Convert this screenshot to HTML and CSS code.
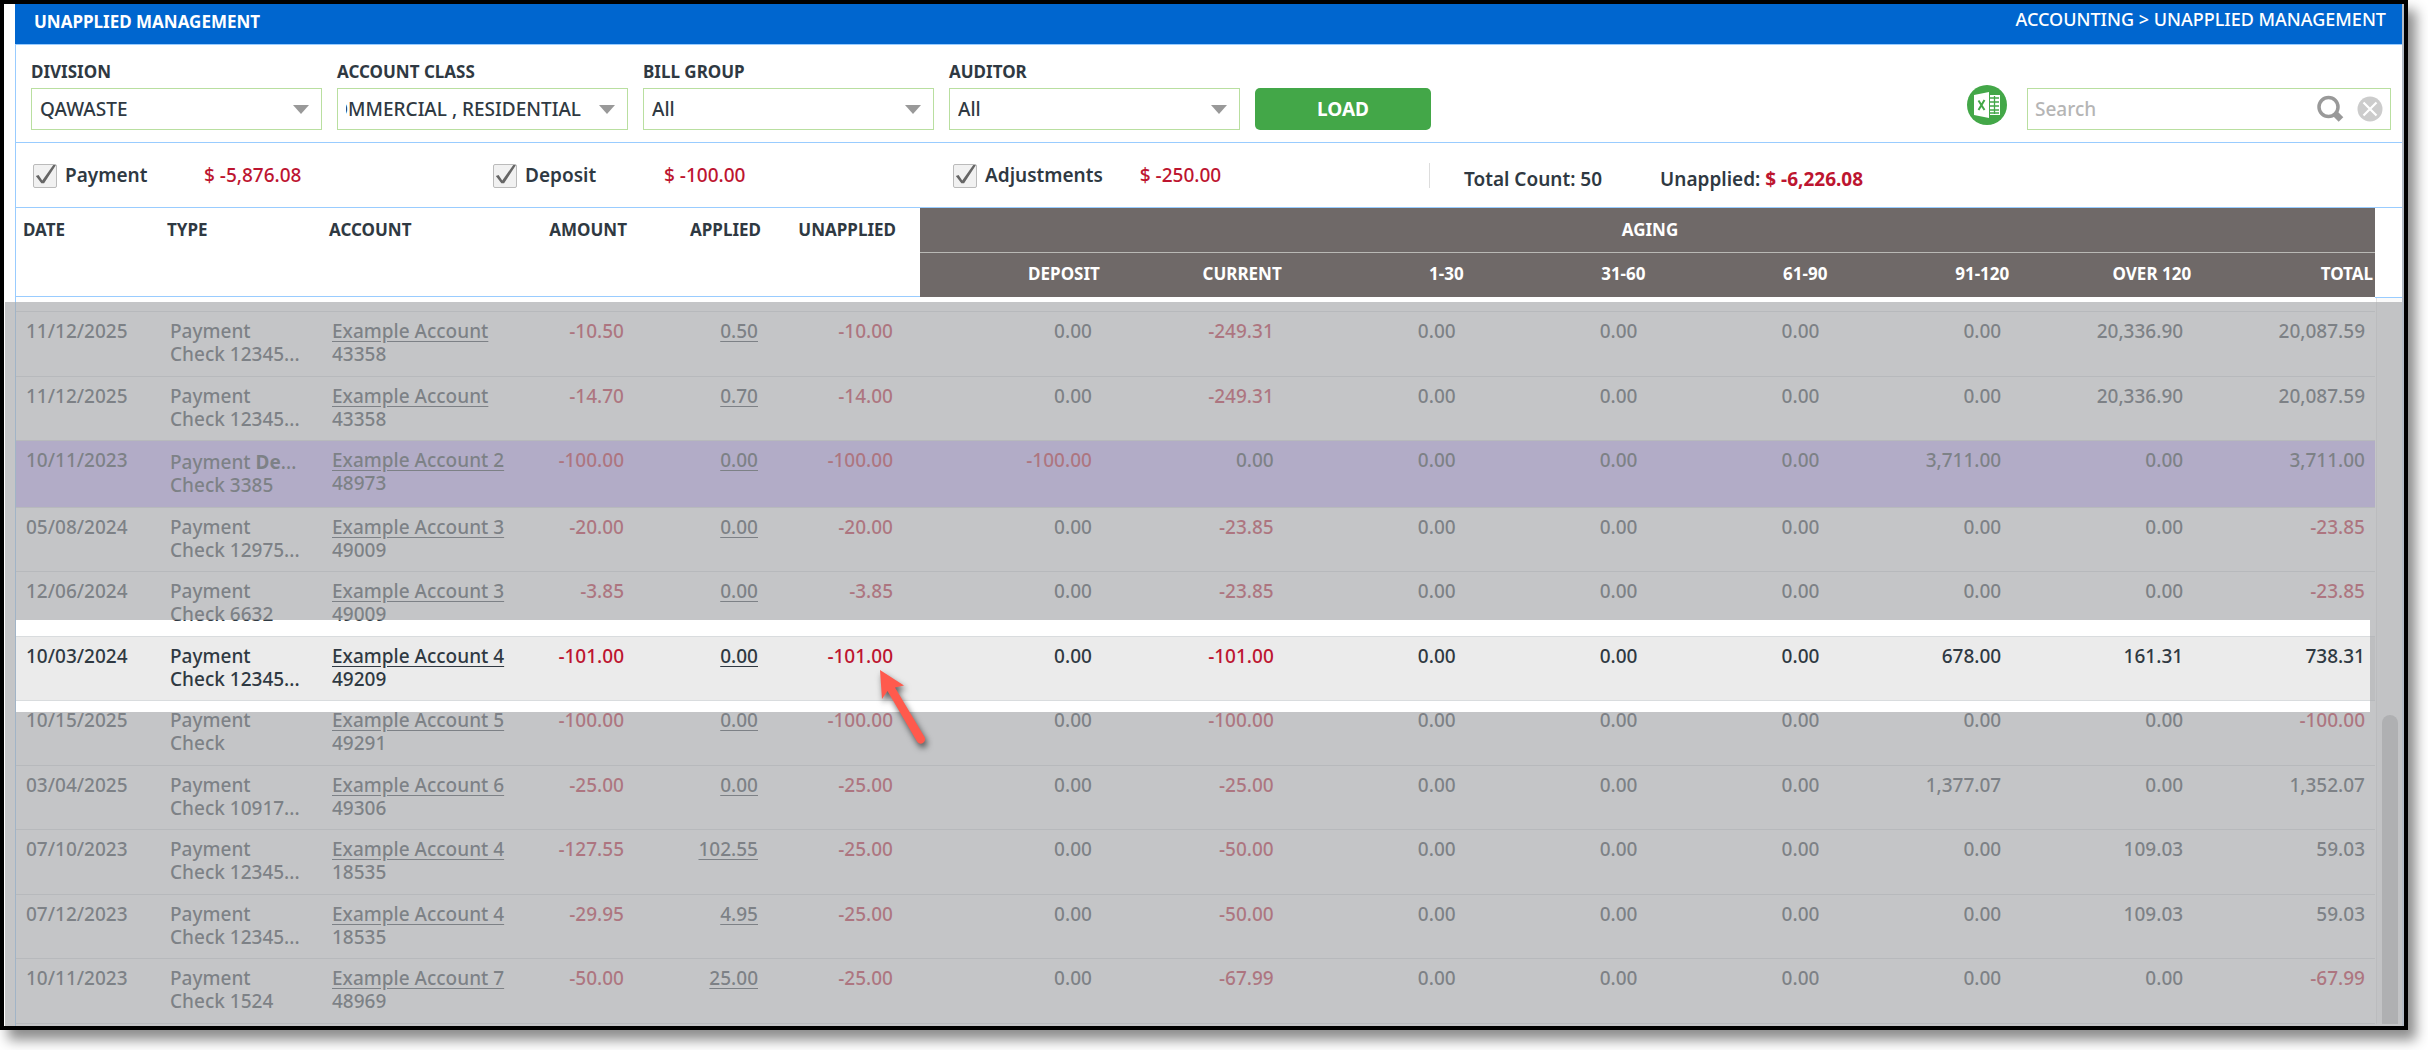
FILE: index.html
```html
<!DOCTYPE html>
<html lang="en">
<head>
    <meta charset="UTF-8">
    <meta name="viewport" content="width=device-width, initial-scale=1.0">
    <title>Unapplied Management</title>
    <link rel="stylesheet" href="styles.css">
</head>
<body>

<div class="window">
    <div class="panel">
        <header class="title-bar">
            <h1>UNAPPLIED MANAGEMENT</h1>
            <span class="breadcrumb">ACCOUNTING &gt; UNAPPLIED MANAGEMENT</span>
        </header>

        <form class="filters">
            <div class="field">
                <label for="division">DIVISION</label>
                <div class="select">
                    <select id="division"><option>QAWASTE</option></select>
                    <svg width="16" height="9" viewBox="0 0 16 9"><path d="M0 0h16L8 9z"/></svg>
                </div>
            </div>
            <div class="field">
                <label for="account-class">ACCOUNT CLASS</label>
                <div class="select">
                    <select id="account-class" class="show-end"><option>COMMERCIAL , RESIDENTIAL</option></select>
                    <svg width="16" height="9" viewBox="0 0 16 9"><path d="M0 0h16L8 9z"/></svg>
                </div>
            </div>
            <div class="field">
                <label for="bill-group">BILL GROUP</label>
                <div class="select">
                    <select id="bill-group"><option>All</option></select>
                    <svg width="16" height="9" viewBox="0 0 16 9"><path d="M0 0h16L8 9z"/></svg>
                </div>
            </div>
            <div class="field">
                <label for="auditor">AUDITOR</label>
                <div class="select">
                    <select id="auditor"><option>All</option></select>
                    <svg width="16" height="9" viewBox="0 0 16 9"><path d="M0 0h16L8 9z"/></svg>
                </div>
            </div>
            <button type="button" class="load">LOAD</button>

            <button type="button" class="excel" aria-label="Export to Excel">
                <svg width="40" height="40" viewBox="0 0 40 40">
                    <circle cx="20" cy="20" r="20" fill="#43a748"/>
                    <path d="M7 10l15-3v26L7 30z" fill="#fff"/>
                    <path d="M23 10h10v20H23z" fill="#fff"/>
                    <path d="M23 13h9M23 17h9M23 21h9M23 25h9M23 28h9M27.500 11v18" stroke="#43a748" stroke-width="1.300"/>
                    <path d="M11.500 15.500l6 9.500M17.500 15l-6 10" stroke="#43a748" stroke-width="2"/>
                </svg>
            </button>
            <div class="search">
                <input type="text" placeholder="Search" aria-label="Search">
                <button type="button" aria-label="Find">
                    <svg width="28" height="28" viewBox="0 0 28 28" fill="none" stroke="#999">
                        <circle cx="12.500" cy="12" r="9.500" stroke-width="3.500"/>
                        <path d="M19 18.500l6 6" stroke-width="6.500"/>
                    </svg>
                </button>
                <button type="button" aria-label="Clear">
                    <svg width="26" height="26" viewBox="0 0 26 26">
                        <circle cx="13" cy="13" r="12.500" fill="#ccc"/>
                        <path d="M6.500 6.500l13 13M19.500 6.500l-13 13" stroke="#fff" stroke-width="2.200"/>
                    </svg>
                </button>
            </div>
        </form>

        <div class="summary">
            <div class="total">
                <input type="checkbox" id="payment" checked>
                <label for="payment">Payment</label>
                <span class="neg">$ -5,876.08</span>
            </div>
            <div class="total">
                <input type="checkbox" id="deposit" checked>
                <label for="deposit">Deposit</label>
                <span class="neg">$ -100.00</span>
            </div>
            <div class="total">
                <input type="checkbox" id="adjustments" checked>
                <label for="adjustments">Adjustments</label>
                <span class="neg">$ -250.00</span>
            </div>
            <div class="grand">
                <span class="count">Total Count: 50</span>
                <span>Unapplied: <b class="neg">$ -6,226.08</b></span>
            </div>
        </div>

        <div class="grid-area">
            <table class="grid">
                <colgroup>
                    <col class="c-date"><col class="c-type"><col class="c-account">
                    <col class="c-amount"><col class="c-applied"><col class="c-unapplied">
                    <col span="8">
                </colgroup>
                <thead>
                    <tr>
                        <th rowspan="2" class="left">DATE</th>
                        <th rowspan="2" class="left">TYPE</th>
                        <th rowspan="2" class="left">ACCOUNT</th>
                        <th rowspan="2">AMOUNT</th>
                        <th rowspan="2">APPLIED</th>
                        <th rowspan="2" class="last">UNAPPLIED</th>
                        <th colspan="8" class="aging aging-title">AGING</th>
                    </tr>
                    <tr>
                        <th class="aging">DEPOSIT</th>
                        <th class="aging">CURRENT</th>
                        <th class="aging">1-30</th>
                        <th class="aging">31-60</th>
                        <th class="aging">61-90</th>
                        <th class="aging">91-120</th>
                        <th class="aging">OVER 120</th>
                        <th class="aging">TOTAL</th>
                    </tr>
                </thead>
                <tbody class="spacer"><tr><td colspan="14"></td></tr></tbody>
                <tbody class="rows">
                    <tr>
                        <td>11/12/2025</td><td>Payment<br>Check 12345...</td><td><a href="#">Example Account</a><br>43358</td>
                        <td class="neg">-10.50</td><td><a href="#">0.50</a></td><td class="neg">-10.00</td>
                        <td>0.00</td><td class="neg">-249.31</td><td>0.00</td><td>0.00</td><td>0.00</td><td>0.00</td><td>20,336.90</td><td>20,087.59</td>
                    </tr>
                    <tr>
                        <td>11/12/2025</td><td>Payment<br>Check 12345...</td><td><a href="#">Example Account</a><br>43358</td>
                        <td class="neg">-14.70</td><td><a href="#">0.70</a></td><td class="neg">-14.00</td>
                        <td>0.00</td><td class="neg">-249.31</td><td>0.00</td><td>0.00</td><td>0.00</td><td>0.00</td><td>20,336.90</td><td>20,087.59</td>
                    </tr>
                    <tr class="deposit">
                        <td>10/11/2023</td><td>Payment <b>De</b>...<br>Check 3385</td><td><a href="#">Example Account 2</a><br>48973</td>
                        <td class="neg">-100.00</td><td><a href="#">0.00</a></td><td class="neg">-100.00</td>
                        <td class="neg">-100.00</td><td>0.00</td><td>0.00</td><td>0.00</td><td>0.00</td><td>3,711.00</td><td>0.00</td><td>3,711.00</td>
                    </tr>
                    <tr>
                        <td>05/08/2024</td><td>Payment<br>Check 12975...</td><td><a href="#">Example Account 3</a><br>49009</td>
                        <td class="neg">-20.00</td><td><a href="#">0.00</a></td><td class="neg">-20.00</td>
                        <td>0.00</td><td class="neg">-23.85</td><td>0.00</td><td>0.00</td><td>0.00</td><td>0.00</td><td>0.00</td><td class="neg">-23.85</td>
                    </tr>
                    <tr>
                        <td>12/06/2024</td><td>Payment<br>Check 6632</td><td><a href="#">Example Account 3</a><br>49009</td>
                        <td class="neg">-3.85</td><td><a href="#">0.00</a></td><td class="neg">-3.85</td>
                        <td>0.00</td><td class="neg">-23.85</td><td>0.00</td><td>0.00</td><td>0.00</td><td>0.00</td><td>0.00</td><td class="neg">-23.85</td>
                    </tr>
                    <tr class="current">
                        <td>10/03/2024</td><td>Payment<br>Check 12345...</td><td><a href="#">Example Account 4</a><br>49209</td>
                        <td class="neg">-101.00</td><td><a href="#">0.00</a></td>
                        <td class="neg pointed">-101.00
                            <svg class="pointer" width="56" height="84" viewBox="0 0 56 84">
                                <path d="M5 5L29 20.500 20 22.500 49.500 72a4 4 0 0 1-7.500 4.500L12.500 26 7 34z" fill="#ff5a4d"/>
                            </svg>
                        </td>
                        <td>0.00</td><td class="neg">-101.00</td><td>0.00</td><td>0.00</td><td>0.00</td><td>678.00</td><td>161.31</td><td>738.31</td>
                    </tr>
                    <tr>
                        <td>10/15/2025</td><td>Payment<br>Check</td><td><a href="#">Example Account 5</a><br>49291</td>
                        <td class="neg">-100.00</td><td><a href="#">0.00</a></td><td class="neg">-100.00</td>
                        <td>0.00</td><td class="neg">-100.00</td><td>0.00</td><td>0.00</td><td>0.00</td><td>0.00</td><td>0.00</td><td class="neg">-100.00</td>
                    </tr>
                    <tr>
                        <td>03/04/2025</td><td>Payment<br>Check 10917...</td><td><a href="#">Example Account 6</a><br>49306</td>
                        <td class="neg">-25.00</td><td><a href="#">0.00</a></td><td class="neg">-25.00</td>
                        <td>0.00</td><td class="neg">-25.00</td><td>0.00</td><td>0.00</td><td>0.00</td><td>1,377.07</td><td>0.00</td><td>1,352.07</td>
                    </tr>
                    <tr>
                        <td>07/10/2023</td><td>Payment<br>Check 12345...</td><td><a href="#">Example Account 4</a><br>18535</td>
                        <td class="neg">-127.55</td><td><a href="#">102.55</a></td><td class="neg">-25.00</td>
                        <td>0.00</td><td class="neg">-50.00</td><td>0.00</td><td>0.00</td><td>0.00</td><td>0.00</td><td>109.03</td><td>59.03</td>
                    </tr>
                    <tr>
                        <td>07/12/2023</td><td>Payment<br>Check 12345...</td><td><a href="#">Example Account 4</a><br>18535</td>
                        <td class="neg">-29.95</td><td><a href="#">4.95</a></td><td class="neg">-25.00</td>
                        <td>0.00</td><td class="neg">-50.00</td><td>0.00</td><td>0.00</td><td>0.00</td><td>0.00</td><td>109.03</td><td>59.03</td>
                    </tr>
                    <tr>
                        <td>10/11/2023</td><td>Payment<br>Check 1524</td><td><a href="#">Example Account 7</a><br>48969</td>
                        <td class="neg">-50.00</td><td><a href="#">25.00</a></td><td class="neg">-25.00</td>
                        <td>0.00</td><td class="neg">-67.99</td><td>0.00</td><td>0.00</td><td>0.00</td><td>0.00</td><td>0.00</td><td class="neg">-67.99</td>
                    </tr>
                </tbody>
            </table>
            <div class="scrollbar">
                <div class="track"><div class="thumb"></div></div>
            </div>
            <div class="shade"><div class="spotlight"></div></div>
        </div>
    </div>
</div>

</body>
</html>
```
FILE: styles.css
```css
* {
    box-sizing: border-box;
}
body {
    margin: 0;
    padding: 0 20px 20px 0;
    background: #fff;
    color: #2f3942;
    font-family: "Noto Sans", "Open Sans", sans-serif;
    font-size: 19px;
    font-weight: 500;
    line-height: 23px;
}
input, select, button {
    font: inherit;
    color: inherit;
}
.window {
    border: 4px solid #000;
    padding-left: 11px;
    background: #fff;
    box-shadow: 8px 10px 12px rgba(0, 0, 0, 0.45);
}
.panel {
    border-left: 1px solid #9cf;
    border-right: 2px solid #b4bcc6;
}
.neg {
    color: #bd1530;
}

/* title bar */
.title-bar {
    display: flex;
    justify-content: space-between;
    height: 41px;
    padding: 4px 16px 0 19px;
    margin-left: -1px;
    background: #0066cf;
    border-bottom: 1px solid #9cf;
    color: #fff;
}
.title-bar h1 {
    margin: 0;
    padding-top: 2px;
    font-size: 17px;
    font-weight: 700;
    line-height: 23px;
}
.breadcrumb {
    font-size: 18px;
}

/* filters */
.filters {
    display: flex;
    align-items: flex-end;
    gap: 15px;
    padding: 15px 11px 12px 15px;
    border-bottom: 1px solid #9cf;
}
.field label {
    display: block;
    margin-bottom: 5px;
    font-size: 17px;
    font-weight: 700;
}
.select {
    display: grid;
    align-items: center;
    width: 291px;
}
.select > * {
    grid-area: 1 / 1;
}
.select select {
    width: 100%;
    height: 42px;
    padding: 0 46px 0 8px;
    appearance: none;
    border: 1px solid #b9dfa0;
    border-radius: 0;
    background: #fff;
    font-weight: 500;
}
.select .show-end {
    direction: rtl;
}
.select svg {
    justify-self: end;
    margin-right: 13px;
    fill: #999;
    pointer-events: none;
}
.load {
    width: 176px;
    height: 42px;
    border: 0;
    border-radius: 5px;
    background: #43a748;
    color: #fff;
    font-weight: 700;
}
.excel {
    height: 40px;
    margin: 0 5px 5px auto;
    padding: 0;
    border: 0;
    background: none;
}
.search {
    display: flex;
    align-items: center;
    gap: 13px;
    width: 364px;
    height: 42px;
    padding: 0 7px;
    border: 1px solid #b9dfa0;
}
.search input {
    flex: 1;
    min-width: 0;
    padding: 0;
    border: 0;
    outline: 0;
}
.search input::placeholder {
    color: #b5b5b5;
}
.search button {
    display: flex;
    padding: 0;
    border: 0;
    background: none;
}

/* totals */
.summary {
    display: flex;
    align-items: center;
    height: 65px;
    padding: 1px 0 0 17px;
    border-bottom: 1px solid #9cf;
}
.total {
    display: flex;
    align-items: center;
    width: 460px;
}
.total input {
    appearance: none;
    width: 24px;
    height: 24px;
    margin: 0 8px 0 0;
    border: 1px solid #bbb;
    border-radius: 2px;
    background: #f1f1f1;
    background-image: url("data:image/svg+xml,%3Csvg xmlns='http://www.w3.org/2000/svg' viewBox='0 0 24 24'%3E%3Cpath d='M2 12l3-1 4 6L21 0h3L11 20H8z' fill='%23666'/%3E%3C/svg%3E");
}
.total label {
    min-width: 139px;
    padding-right: 37px;
    font-weight: 600;
}
.grand {
    display: flex;
    gap: 58px;
    height: 25px;
    padding: 5px 0 0 34px;
    border-left: 1px solid #ddd;
    margin-left: 16px;
    font-weight: 600;
}
.grand b {
    font-weight: 700;
}

/* grid */
.grid-area {
    position: relative;
    display: flex;
    padding-bottom: 2px;
}
.grid {
    flex: 1;
    width: 0;
    table-layout: fixed;
    border-collapse: separate;
    border-spacing: 0;
}
.c-date { width: 144px; }
.c-type { width: 162px; }
.c-account { width: 188px; }
.c-amount { width: 127px; }
.c-applied { width: 134px; }
.c-unapplied { width: 149px; }
.grid th {
    height: 45px;
    padding: 10px 10px 0 7px;
    border-bottom: 1px solid #9cf;
    font-size: 17px;
    font-weight: 700;
    text-align: right;
    vertical-align: top;
}
.grid thead tr:last-child th {
    height: 44px;
    padding-top: 9px;
}
.grid th.left {
    text-align: left;
}
.grid th.last {
    padding-right: 24px;
}
.grid th.aging {
    padding-right: 2px;
    border-bottom: 0;
    background: #6f6968;
    color: #fff;
}
.grid th.aging-title {
    border-bottom: 1px solid #b9b9b5;
    text-align: center;
}
.grid .spacer td {
    height: 15px;
    padding: 0;
}
.grid td {
    padding: 8px 10px 0;
    border-bottom: 1px solid #d9dcde;
    text-align: right;
    vertical-align: top;
    white-space: nowrap;
}
.grid td:nth-child(-n+3) {
    text-align: left;
}
.grid td:nth-child(4), .grid td:nth-child(5) {
    padding-right: 13px;
}
.grid td:nth-child(6) {
    padding-right: 27px;
}
.grid td a {
    color: inherit;
    text-underline-offset: 3px;
}
.rows tr {
    height: 65px;
}
.rows tr:nth-child(even) {
    height: 64px;
}
.rows .deposit {
    height: 67px;
    background: #cbb5ff;
}
.rows .deposit td:nth-child(2) {
    padding-top: 10px;
}
.rows .current {
    background: #ebebeb;
}
.pointed {
    position: relative;
}
.pointer {
    position: absolute;
    top: 28px;
    left: 104px;
    z-index: 2;
    filter: drop-shadow(2px 4px 3px rgba(0, 0, 0, 0.6));
}

/* scroll bar beside the rows */
.scrollbar {
    display: flex;
    flex-direction: column;
    width: 27px;
}
.scrollbar::before {
    content: "";
    height: 89px;
    border-bottom: 1px solid #9cf;
}
.track {
    display: flex;
    justify-content: center;
    flex: 1;
    margin-left: 1px;
    border-left: 1px solid #e4e4e4;
    background: #fafafa;
}
.thumb {
    width: 16px;
    margin-top: 417px;
    border-radius: 8px 8px 0 0;
    background: #c1c1c1;
}

/* dims everything but the current row */
.shade {
    position: absolute;
    top: 94px;
    right: 0;
    bottom: 0;
    left: -11px;
    z-index: 1;
    overflow: hidden;
    pointer-events: none;
}
.spotlight {
    height: 92px;
    margin: 318px 32px 0 11px;
    box-shadow: 0 0 0 3000px rgba(166, 167, 170, 0.66);
}
```
